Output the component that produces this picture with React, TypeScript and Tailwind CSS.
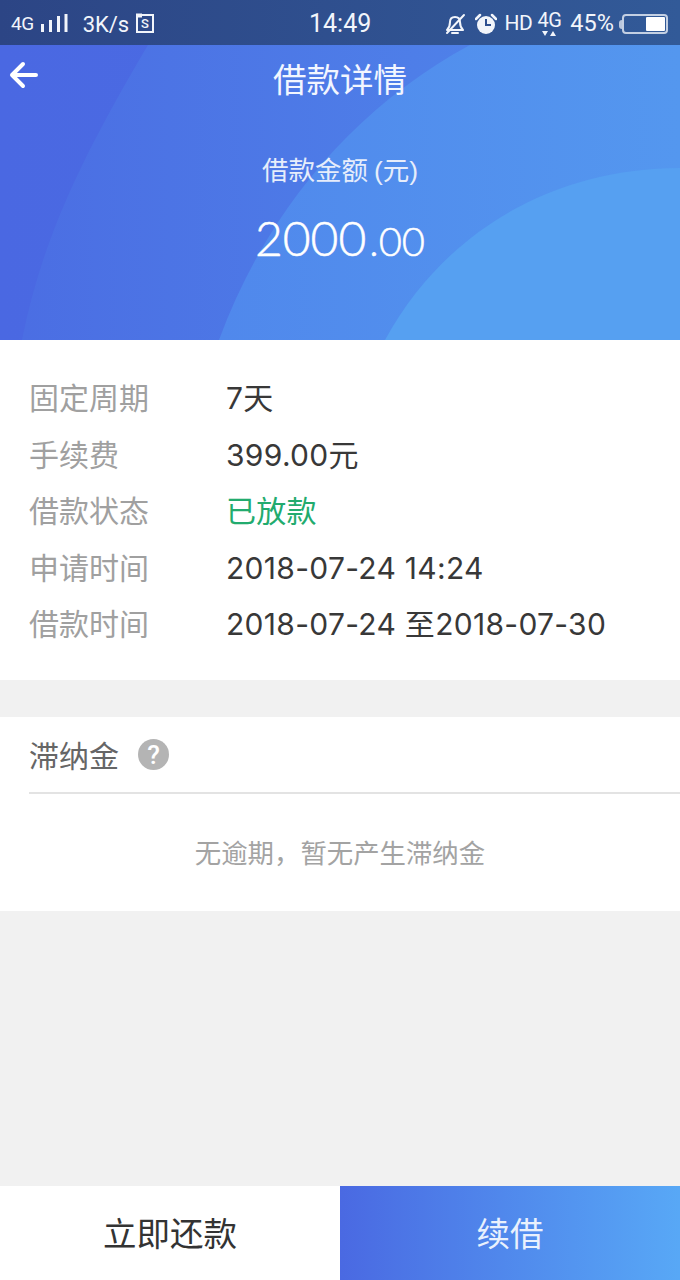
import React from "react";

const rows: { label: string; value: string; green?: boolean }[] = [
  { label: "固定周期", value: "7天" },
  { label: "手续费", value: "399.00元" },
  { label: "借款状态", value: "已放款", green: true },
  { label: "申请时间", value: "2018-07-24 14:24" },
  { label: "借款时间", value: "2018-07-24 至2018-07-30" },
];

function StatusBar() {
  return (
    <div className="relative z-10 h-[45px] text-[#f2f5fb] flex items-center justify-between pl-[11px] pr-[12px] pt-[3px] bg-gradient-to-r from-[#2c4585] to-[#325a98] font-['Roboto',sans-serif]">
      <div className="flex items-center">
        <span className="text-[19px] tracking-[-0.5px]">4G</span>
        <svg width="27" height="20" viewBox="0 0 27 20" className="ml-[7px] -mt-[2px]" fill="currentColor">
          <rect x="0" y="11" width="3" height="8" />
          <rect x="8" y="7" width="3" height="12" />
          <rect x="16" y="3" width="3" height="16" />
          <rect x="23.5" y="1" width="3" height="18" />
        </svg>
        <span className="ml-[15px] text-[22px]">3K/s</span>
        <svg width="20" height="20" viewBox="0 0 20 20" className="ml-[6px] -mt-[2px]" fill="none" stroke="currentColor">
          <path d="M2 2h16v17H2z" strokeWidth="2" />
          <path d="M1 2.5h6" strokeWidth="4" />
          <text x="10" y="15" textAnchor="middle" fontSize="13" fill="currentColor" stroke="none" fontFamily="Roboto" fontWeight="500">S</text>
        </svg>
      </div>
      <span className="absolute left-[309px] text-[25px]">14:49</span>
      <div className="flex items-center">
        <svg width="22" height="24" viewBox="0 0 22 24" fill="none" stroke="currentColor" strokeWidth="2" strokeLinejoin="round" strokeLinecap="round">
          <path d="M3 18c2-2 3-4 3-8 0-3 2-5 5-5s5 2 5 5c0 4 1 6 3 8z" />
          <path d="M8 21h6" />
          <path d="M3 21 20 3" />
        </svg>
        <svg width="22" height="24" viewBox="0 0 22 24" className="ml-[9px]">
          <circle cx="11" cy="13" r="9" fill="currentColor" />
          <path d="M11 7v6h5" stroke="#2f5090" strokeWidth="2" fill="none" />
          <path d="M1 7l4-4M21 7l-4-4" stroke="currentColor" strokeWidth="2.5" strokeLinecap="round" />
        </svg>
        <span className="ml-[8px] text-[21px] tracking-[-0.5px]">HD</span>
        <div className="ml-[5px] w-[24px] h-[28px] flex flex-col items-center">
          <span className="text-[20px] leading-[20px] tracking-[-0.5px]">4G</span>
          <svg width="14" height="7" viewBox="0 0 14 7" fill="currentColor">
            <path d="M0 1h6L3 6zM8 6h6l-3-5z" />
          </svg>
        </div>
        <span className="ml-[9px] text-[23.5px]">45%</span>
        <div className="ml-[5px] w-[3px] h-[9px] bg-[#f2f5fb]/70 rounded-l-sm" />
        <div className="w-[46px] h-[20px] border-2 border-[#e8edf6]/80 rounded-[4px] flex justify-end p-[1px]">
          <div className="w-[19px] bg-white rounded-[1px]" />
        </div>
      </div>
    </div>
  );
}

export default function App() {
  return (
    <div className="relative w-[680px] h-[1280px] bg-[#f1f1f1] overflow-hidden flex flex-col font-['Noto_Sans_CJK_SC',sans-serif]">
      <header className="relative h-[340px] shrink-0 bg-gradient-to-r from-[#4a68e2] to-[#4b6fe4] overflow-hidden">
        <svg className="absolute inset-0" width="680" height="340" viewBox="0 0 680 340">
          <defs>
            <linearGradient id="arcA" x1="0" x2="1" y1="0" y2="0">
              <stop offset="0" stopColor="#4b6ee3" />
              <stop offset="1" stopColor="#4f84ea" />
            </linearGradient>
            <linearGradient id="arcB" x1="0" x2="1" y1="0" y2="0">
              <stop offset="0" stopColor="#5088ec" />
              <stop offset="1" stopColor="#5497ef" />
            </linearGradient>
          </defs>
          <path d="M22 340C42 240 80 160 148 45H560V340Z" fill="url(#arcA)" />
          <path d="M219 340C265 215 350 110 470 45H680V340Z" fill="url(#arcB)" />
          <path d="M385 340C445 230 555 168 680 168V340Z" fill="#56a0f1" />
        </svg>
        <StatusBar />
        <svg width="30" height="30" viewBox="0 0 30 30" className="absolute left-[9px] top-[60px]" fill="none" stroke="#fff" strokeWidth="4" strokeLinecap="round" strokeLinejoin="round">
          <path d="M3 15h24M14 4 3 15l11 11" />
        </svg>
        <div className="relative flex flex-col items-center text-white">
          <h1 className="mt-[10px] h-[46px] text-[33.5px] leading-[46px] font-normal text-[#f2f6ff]">借款详情</h1>
          <p className="mt-[50px] h-[36px] text-[26.5px] leading-[36px] text-[#e6edfb]">
            借款金额 <span className="font-['Liberation_Sans',sans-serif]">(</span>元<span className="font-['Liberation_Sans',sans-serif]">)</span>
          </p>
          <p className="mt-[22px] h-[58px] text-[48px] leading-[58px] font-light font-['Lato','Inter',sans-serif] [-webkit-text-stroke:0.5px_white]">
            2000<span className="text-[40px] ml-[3px]">.00</span>
          </p>
        </div>
      </header>

      <section className="bg-white h-[340px] shrink-0 pt-[30px] pl-[29px]">
        {rows.map((r) => (
          <div key={r.label} className="flex h-[56.5px] items-center text-[30px] leading-none">
            <span className="w-[198px] text-[#a0a0a0] pb-[4px]">{r.label}</span>
            <span className={`font-['Inter','Noto_Sans_CJK_SC',sans-serif] tracking-[0.3px] -ml-[1px] ${r.green ? "text-[#22ab6e]" : "text-[#383838]"}`}>{r.value}</span>
          </div>
        ))}
      </section>

      <section className="mt-[37px] bg-white h-[194px] shrink-0">
        <div className="ml-[29px] h-[77px] border-b-2 border-[#e3e3e3] flex items-center">
          <span className="text-[30px] text-[#666666] leading-none pb-[2px]">滞纳金</span>
          <span className="ml-[19px] w-[31px] h-[31px] rounded-full bg-[#b4b4b4] text-white flex items-center justify-center text-[26px] font-medium leading-none font-['Roboto',sans-serif]">?</span>
        </div>
        <p className="mt-[39px] text-center text-[26.4px] leading-[38px] text-[#a3a3a3]">无逾期，暂无产生滞纳金</p>
      </section>

      <footer className="mt-auto h-[94px] flex text-[33.5px]">
        <button className="w-[340px] bg-white text-[#333333] pb-[2px]">立即还款</button>
        <button className="w-[340px] bg-gradient-to-r from-[#4a69e2] to-[#58a8f6] text-[#e9f1fd] pb-[2px]">续借</button>
      </footer>
    </div>
  );
}
